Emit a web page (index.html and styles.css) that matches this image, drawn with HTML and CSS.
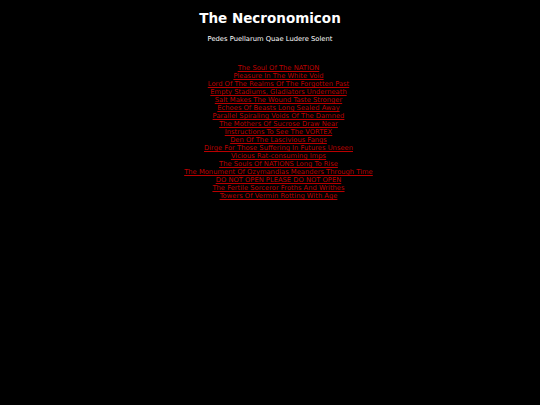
FILE: index.html
```html
<!DOCTYPE html>
<html>
<head>
<meta charset="utf-8">
<title>The Necronomicon</title>
<link rel="stylesheet" href="styles.css">
</head>
<body>
<div class="page">
  <h1 class="title">The Necronomicon</h1>
  <p class="subtitle">Pedes Puellarum Quae Ludere Solent</p>
  <ul class="links">
    <li><a href="#">The Soul Of The NATION</a></li>
    <li><a href="#">Pleasure In The White Void</a></li>
    <li><a href="#">Lord Of The Realms Of The Forgotten Past</a></li>
    <li><a href="#">Empty Stadiums, Gladiators Underneath</a></li>
    <li><a href="#">Salt Makes The Wound Taste Stronger</a></li>
    <li><a href="#">Echoes Of Beasts Long Sealed Away</a></li>
    <li><a href="#">Parallel Spiraling Voids Of The Damned</a></li>
    <li><a href="#">The Mothers Of Sucrose Draw Near</a></li>
    <li><a href="#">Instructions To See The VORTEX</a></li>
    <li><a href="#">Den Of The Lascivious Fangs</a></li>
    <li><a href="#">Dirge For Those Suffering In Futures Unseen</a></li>
    <li><a href="#">Vicious Rat-consuming Imps</a></li>
    <li><a href="#">The Souls Of NATIONS Long To Rise</a></li>
    <li><a href="#">The Monument Of Ozymandias Meanders Through Time</a></li>
    <li><a href="#">DO NOT OPEN PLEASE DO NOT OPEN</a></li>
    <li><a href="#">The Fertile Sorceror Froths And Writhes</a></li>
    <li><a href="#">Towers Of Vermin Rotting With Age</a></li>
  </ul>
</div>
</body>
</html>
```
FILE: styles.css
```css
html, body {
  margin: 0;
  padding: 0;
  background: #000;
  color: #fff;
  font-family: "DejaVu Sans", Verdana, sans-serif;
}
.page {
  text-align: center;
  padding-top: 9px;
}
.title {
  margin: 0;
  font-size: 13.5px;
  line-height: 18px;
  font-weight: bold;
}
.subtitle {
  margin: 7px 0 0 0;
  font-size: 6.75px;
  line-height: 10px;
}
.links {
  list-style: none;
  margin: 20px 0 0 0;
  padding: 0 0 0 17px;
  font-size: 6.75px;
  line-height: 8px;
}
.links a {
  color: #b00;
  text-decoration: underline;
}
```
